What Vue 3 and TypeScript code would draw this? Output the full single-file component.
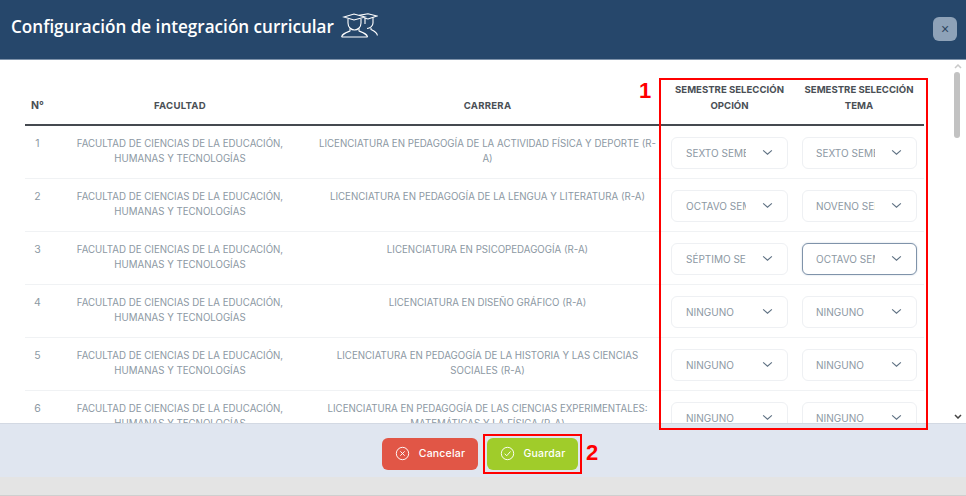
<script setup lang="ts">
interface Row { n: number; carrera: string[]; a: string; b: string; focus?: boolean }
const rows: Row[] = [
  { n: 1, carrera: ['LICENCIATURA EN PEDAGOGÍA DE LA ACTIVIDAD FÍSICA Y DEPORTE (R-', 'A)'], a: 'SEXTO SEMESTRE', b: 'SEXTO SEMESTRE' },
  { n: 2, carrera: ['LICENCIATURA EN PEDAGOGÍA DE LA LENGUA Y LITERATURA (R-A)'], a: 'OCTAVO SEMESTRE', b: 'NOVENO SEMESTRE' },
  { n: 3, carrera: ['LICENCIATURA EN PSICOPEDAGOGÍA (R-A)'], a: 'SÉPTIMO SEMESTRE', b: 'OCTAVO SEMESTRE', focus: true },
  { n: 4, carrera: ['LICENCIATURA EN DISEÑO GRÁFICO (R-A)'], a: 'NINGUNO', b: 'NINGUNO' },
  { n: 5, carrera: ['LICENCIATURA EN PEDAGOGÍA DE LA HISTORIA Y LAS CIENCIAS', 'SOCIALES (R-A)'], a: 'NINGUNO', b: 'NINGUNO' },
  { n: 6, carrera: ['LICENCIATURA EN PEDAGOGÍA DE LAS CIENCIAS EXPERIMENTALES:', 'MATEMÁTICAS Y LA FÍSICA (R-A)'], a: 'NINGUNO', b: 'NINGUNO' },
]
</script>

<template>
  <div class="page">
    <header class="head">
      <h1>Configuración de integración curricular</h1>
      <svg class="grad" viewBox="0 0 37 25" fill="none" stroke="#fff" stroke-width="1.1">
        <path d="M3 4 L13 1 L24 4 L13 7 Z" />
        <path d="M7 6 V10 C7 14 10 17 13.5 17 C17 17 20 14 20 10 V6" />
        <path d="M0.6 24 C1 21 4 20 9 18 V15.5 M18 15.5 V18 C23 20 26 21 26.6 24 M0.6 24 H26.6" />
        <path d="M18 2.4 L27 0.8 L36 3 L27 6 L23 5" />
        <path d="M24 6 V11 M32 4.5 V10 C32 13 29 15.5 26 15.5" />
        <path d="M30 15 V16.5 C33 18 36 19 36.4 22.5" />
      </svg>
      <button class="close" type="button" aria-label="Cerrar">×</button>
    </header>

    <main class="body">
      <div class="table">
        <div class="row hrow">
          <div class="num">N°</div>
          <div class="cell">FACULTAD</div>
          <div class="cell">CARRERA</div>
          <div class="cell">SEMESTRE SELECCIÓN<br />OPCIÓN</div>
          <div class="cell">SEMESTRE SELECCIÓN<br />TEMA</div>
        </div>
        <div v-for="r in rows" :key="r.n" class="row drow">
          <div class="num">{{ r.n }}</div>
          <div class="cell">FACULTAD DE CIENCIAS DE LA EDUCACIÓN,<br />HUMANAS Y TECNOLOGÍAS</div>
          <div class="cell"><template v-for="(l, i) in r.carrera" :key="i"><br v-if="i" />{{ l }}</template></div>
          <div class="selcell">
            <div class="sel s1"><span class="val">{{ r.a }}</span>
              <svg viewBox="0 0 12 8" class="chev"><path d="M1 1.5 L6 6 L11 1.5" /></svg></div>
          </div>
          <div class="selcell">
            <div class="sel s2" :class="{ focus: r.focus }"><span class="val">{{ r.b }}</span>
              <svg viewBox="0 0 12 8" class="chev"><path d="M1 1.5 L6 6 L11 1.5" /></svg></div>
          </div>
        </div>
      </div>
      <div class="scroll">
        <svg class="arrow up" viewBox="0 0 8 5"><path d="M1 4 L4 1 L7 4" /></svg>
        <div class="thumb"></div>
        <svg class="arrow down" viewBox="0 0 8 5"><path d="M1 1 L4 4 L7 1" /></svg>
      </div>
    </main>

    <footer class="foot">
      <button class="btn cancel" type="button">
        <svg viewBox="0 0 16 16" class="bi"><circle cx="8" cy="8" r="6.6" /><path d="M5.7 5.7 L10.3 10.3 M10.3 5.7 L5.7 10.3" /></svg>
        Cancelar
      </button>
      <div class="save-wrap">
        <button class="btn save" type="button">
          <svg viewBox="0 0 16 16" class="bi"><circle cx="8" cy="8" r="6.6" /><path d="M5 8.3 L7.2 10.4 L11.2 5.8" /></svg>
          Guardar
        </button>
        <span class="num-mark nm2">2</span>
      </div>
    </footer>
    <div class="strip"></div>
    <div class="mark"></div>
    <span class="num-mark nm1">1</span>
  </div>
</template>

<style>
html, body { margin: 0; background: #fff; }
</style>

<style scoped>
.page { width: 966px; height: 496px; display: flex; flex-direction: column; overflow: hidden; position: relative; font-family: Inter, "Noto Sans", sans-serif; }
.head { height: 59px; flex: none; background: #26476b; border-bottom: 1px solid #7f93aa; display: flex; align-items: flex-start; padding: 0 11px; position: relative; box-sizing: content-box; }
.head h1 { margin: 15px 0 0; font: 600 17.1px/24px "Open Sans", sans-serif; color: #fff; }
.grad { width: 37px; height: 25px; margin: 13px 0 0 7px; }
.close { position: absolute; right: 9px; top: 17px; width: 24px; height: 24px; border: 0; border-radius: 6px; background: #8ea2b8; color: #2f4660; font: 400 14px/24px "Liberation Sans", sans-serif; padding: 0; }
.body { height: 363px; flex: none; position: relative; overflow: hidden; box-sizing: border-box; padding: 20px 42px 0 25px; }
.table { width: 899px; }
.row { display: grid; grid-template-columns: 25px 260px 355px 129px 130px; }
.hrow { height: 44px; border-bottom: 2px solid #454a50; box-sizing: content-box; font-weight: 700; font-size: 9.6px; line-height: 16px; color: #4a4f55; text-align: center; }
.hrow > div { align-self: end; padding-bottom: 10px; }
.hrow .cell:nth-child(2), .hrow .cell:nth-child(3) { letter-spacing: .25px; }
.drow { height: 52px; border-bottom: 1px solid #f0f2f4; color: #8c98a3; font-size: 9.7px; line-height: 15px; text-align: center; }
.drow .num, .drow .cell { padding-top: 10px; }
.num { text-align: center; font-size: 10.5px; }
.selcell { display: flex; }
.sel { height: 32px; margin-top: 11px; border: 1px solid #eef0f3; border-radius: 6px; box-sizing: border-box; display: flex; align-items: center; padding-left: 14px; color: #8c98a3; font-size: 10px; line-height: 14px; text-align: left; background: #fff; position: relative; }
.s1 { width: 117px; margin-left: 6px; }
.s2 { width: 115px; margin-left: 8px; padding-left: 13px; }
.s2 .val { width: 59px; }
.focus { border-color: #7f93aa; box-shadow: 0 0 2px #c5d0dc; }
.val { width: 60px; overflow: hidden; white-space: nowrap; }
.chev { position: absolute; right: 14px; top: 11px; width: 11px; height: 7px; fill: none; stroke: #5f7183; stroke-width: 1.3; }
.scroll { position: absolute; right: 0; top: 0; width: 16px; height: 100%; }
.arrow { position: absolute; left: 4px; width: 8px; height: 5px; fill: none; stroke-width: 1.5; }
.up { top: 4px; stroke: #c9c9c9; }
.down { bottom: 4px; stroke: #444; }
.thumb { position: absolute; left: 4px; top: 12px; width: 6px; height: 66px; border-radius: 3px; background: #c2c2c2; }
.mark { position: absolute; left: 659px; top: 78px; width: 269px; height: 352px; border: 2px solid #f00; box-sizing: border-box; pointer-events: none; z-index: 5; }
.num-mark { position: absolute; color: #f00; font: 700 22px/24px "Liberation Sans", sans-serif; z-index: 5; }
.nm1 { left: 639px; top: 79px; }
.foot { height: 54px; flex: none; background: #e0e6f0; border-top: 1px solid #d3d9e3; box-sizing: border-box; display: flex; justify-content: center; align-items: center; gap: 5px; position: relative; padding: 6px 2px 0 0; }
.btn { height: 32px; border: 0; border-radius: 6px; color: #fff; font: 500 10.5px/32px Inter, sans-serif; letter-spacing: .2px; display: flex; align-items: center; justify-content: center; gap: 9px; padding: 0; }
.bi { width: 15px; height: 15px; fill: none; stroke: #fff; stroke-width: 1; }
.cancel { width: 96px; background: #e15646; }
.save-wrap { position: relative; border: 2px solid #f00; width: 99px; height: 40px; box-sizing: border-box; display: flex; align-items: center; justify-content: center; }
.save { width: 91px; background: #a0cc2a; }
.nm2 { left: 101px; top: 5px; }
.strip { flex: 1; background: #e4e4e4; border-bottom: 1px solid #cfcfcf; }
</style>
